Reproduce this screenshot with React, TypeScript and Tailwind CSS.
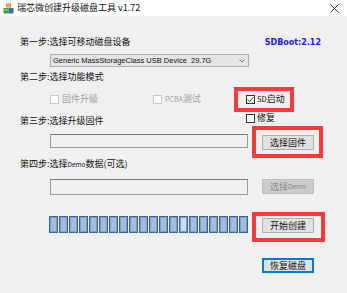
import React from "react";

const cjk = { fontFamily: '"Noto Sans CJK SC", "Noto Sans", sans-serif' };

function Box({ checked, disabled }: { checked?: boolean; disabled?: boolean }) {
  return (
    <div
      className={
        "w-[9px] h-[9px] border bg-white flex items-center justify-center shrink-0 " +
        (disabled ? "border-[#c8c8c8]" : "border-[#333333]")
      }
    >
      {checked && (
        <svg width="7" height="7" viewBox="0 0 7 7">
          <path d="M0.8 3.6 L2.7 5.5 L6.3 1.2" fill="none" stroke="#333" strokeWidth="1" />
        </svg>
      )}
    </div>
  );
}

function Btn({ children, disabled, focus }: { children: React.ReactNode; disabled?: boolean; focus?: boolean }) {
  return (
    <div
      className={
        "w-[52px] h-[15px] flex items-center justify-center text-[9px] leading-none " +
        (disabled
          ? "bg-[#cccccc] border border-[#bfbfbf] text-[#8a8a8a]"
          : focus
          ? "bg-[#e1e1e1] border-2 border-[#0078d7] text-[#111]"
          : "bg-[#e1e1e1] border border-[#adadad] text-[#111]")
      }
      style={cjk}
    >
      {children}
    </div>
  );
}

export default function App() {
  const blocks = Array.from({ length: 20 }, (_, i) => i);
  return (
    <div className="w-[347px] h-[293px] bg-[#f0f0f0] overflow-hidden relative text-[#111]" style={cjk}>
      {/* title bar */}
      <div className="h-[16px] bg-white flex items-center">
        <svg className="ml-[3px]" width="11" height="11" viewBox="0 0 11 11">
          <rect x="3" y="0.5" width="5" height="4" fill="#e8812f" />
          <rect x="4" y="1.5" width="3" height="2" fill="#f4b26a" />
          <rect x="0.5" y="5" width="5" height="5.5" fill="#3f9a48" />
          <rect x="5.5" y="5" width="5" height="5.5" fill="#3d6fb8" />
          <rect x="1.5" y="6" width="3" height="2" fill="#7fcf7f" />
        </svg>
        <span className="ml-[3px] text-[9px] leading-[12px] text-[#111]">瑞芯微创建升级磁盘工具 v1.72</span>
        <svg className="ml-auto mr-[8px]" width="9" height="9" viewBox="0 0 9 9">
          <path d="M0.5 0.5 L8.5 8.5 M8.5 0.5 L0.5 8.5" stroke="#222" strokeWidth="0.9" />
        </svg>
      </div>

      <div className="pl-[20px]">
        {/* step 1 */}
        <div className="mt-[20px] h-[12px] flex items-center">
          <span className="text-[9px] leading-[12px]">第一步:选择可移动磁盘设备</span>
          <span
            className="ml-auto mr-[26px] mt-[2px] text-[8px] font-bold text-[#1a1aff] leading-[12px]"
            style={{ fontFamily: '"DejaVu Sans", sans-serif' }}
          >
            SDBoot:2.12
          </span>
        </div>
        <div className="mt-[6px] ml-[30px] w-[199px] h-[13px] bg-[#e5e5e5] border border-[#adadad] flex items-center pl-[2px]">
          <span
            className="text-[7.5px] leading-none text-[#111] whitespace-pre"
            style={{ fontFamily: '"Liberation Sans", Arial, sans-serif' }}
          >
            Generic MassStorageClass USB Device  29.7G
          </span>
          <svg className="ml-auto mr-[3px]" width="6" height="4" viewBox="0 0 6 4">
            <path d="M0.5 0.5 L3 3 L5.5 0.5" fill="none" stroke="#555" strokeWidth="0.8" />
          </svg>
        </div>

        {/* step 2 */}
        <div className="mt-[4px] h-[12px] flex items-center">
          <span className="text-[9px] leading-[12px]">第二步:选择功能模式</span>
        </div>
        <div className="mt-[10px] h-[12px] flex items-start ml-[30px]">
          <div className="w-[103px] h-[12px] flex items-center gap-[3px]">
            <Box disabled />
            <span className="text-[9px] leading-[12px] text-[#a0a0a0]">固件升级</span>
          </div>
          <div className="w-[93px] h-[12px] flex items-center gap-[3px]">
            <Box disabled />
            <span className="text-[9px] leading-[12px] text-[#a0a0a0]">
              <span className="text-[7px]">PCBA</span>测试
            </span>
          </div>
          <div className="flex flex-col">
            <div className="h-[12px] flex items-center gap-[2px]">
              <Box checked />
              <span className="text-[9px] leading-[12px]">
                <span className="text-[7.5px]">SD</span>启动
              </span>
            </div>
            <div className="mt-[7px] h-[12px] flex items-center gap-[2px]">
              <Box />
              <span className="text-[9px] leading-[12px]">修复</span>
            </div>
          </div>
        </div>

        {/* step 3 */}
        <div className="mt-[10px] h-[12px] flex items-center">
          <span className="text-[9px] leading-[12px]">第三步:选择升级固件</span>
        </div>
        <div className="mt-[7px] h-[17px] flex items-start">
          <div className="ml-[30px] w-[198px] h-[14px] bg-[#f0f0f0] border border-[#9a9a9a] border-t-[#7a7a7a]" />
          <div className="ml-[14px] mt-[1px]">
            <Btn>选择固件</Btn>
          </div>
        </div>

        {/* step 4 */}
        <div className="mt-[7px] h-[12px] flex items-center">
          <span className="text-[9px] leading-[12px]">
            第四步:选择<span className="text-[6.5px]">Demo</span>数据(可选)
          </span>
        </div>
        <div className="mt-[9px] h-[16px] flex items-start">
          <div className="ml-[30px] w-[198px] h-[16px] bg-[#f0f0f0] border border-[#9a9a9a] border-t-[#7a7a7a]" />
          <div className="ml-[14px]">
            <Btn disabled>
              选择<span className="text-[6.5px]">Demo</span>
            </Btn>
          </div>
        </div>

        {/* progress */}
        <div className="mt-[21px] h-[17px] flex items-start">
          <div className="ml-[29px] flex gap-[1px]">
            {blocks.map((i) => (
              <div
                key={i}
                className={
                  "w-[9px] h-[17px] border border-[#3e6494] shadow-[inset_0_0_0_1px_#7f9dc4] " +
                  (i === 13 ? "bg-[#c2defd]" : "bg-[#a0bedf]")
                }
              />
            ))}
          </div>
          <div className="ml-[14px] mt-[2px]">
            <Btn>开始创建</Btn>
          </div>
        </div>

        <div className="mt-[25px] ml-[242px]">
          <Btn focus>恢复磁盘</Btn>
        </div>
      </div>

      {/* red annotation boxes */}
      <div className="absolute left-[234px] top-[87px] w-[60px] h-[25px] border-[4px] border-[#fa3a3a]" />
      <div className="absolute left-[252px] top-[126px] w-[71px] h-[32px] border-[4px] border-[#fa3a3a]" />
      <div className="absolute left-[252px] top-[212px] w-[73px] h-[30px] border-[4px] border-[#fa3a3a]" />
    </div>
  );
}
